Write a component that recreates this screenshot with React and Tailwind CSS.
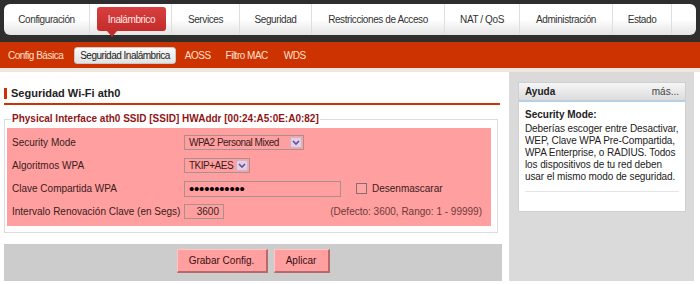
import React from 'react';

const tabs = [
    { label: 'Configuración', w: 'w-[86px]' },
    { label: 'Inalámbrico', w: 'w-[82px]', active: true },
    { label: 'Services', w: 'w-[68px]' },
    { label: 'Seguridad', w: 'w-[72px]' },
    { label: 'Restricciones de Acceso', w: 'w-[133px]' },
    { label: 'NAT / QoS', w: 'w-[75px]' },
    { label: 'Administración', w: 'w-[93px]' },
    { label: 'Estado', w: 'w-[59px]' },
];

function Chevron() {
    return (
        <svg width="8" height="5" viewBox="0 0 8 5">
            <path d="M1 1 L4 4 L7 1" fill="none" stroke="#5b4f9c" strokeWidth="1.6" />
        </svg>
    );
}

function FakeSelect({ value, width }) {
    return (
        <div className={`${width} h-[15px] flex items-center justify-between border border-[#a89090] bg-[#ff9f9f] pl-[4px] pr-[1px]`}>
            <span className="text-[#3a2020] leading-none whitespace-nowrap tracking-[-0.5px]">{value}</span>
            <span className="w-[12px] h-[11px] flex items-center justify-center bg-[#e6cfe2] border border-[#d0b4cc] rounded-[2px]">
                <Chevron />
            </span>
        </div>
    );
}

function Row({ label, children }) {
    return (
        <div className="h-[23px] flex items-center">
            <div className="w-[177px] shrink-0 pl-[5px] whitespace-nowrap text-[#3a2020]">{label}</div>
            {children}
        </div>
    );
}

export default function App() {
    return (
        <div className="w-[700px] h-[284px] overflow-hidden bg-white font-['Liberation_Sans',Arial,sans-serif] text-[10px] text-[#333]">
            {/* top tabs */}
            <div className="h-[42px] bg-[#2e2e2e] pt-[4px] pl-[4px] pr-[4px]">
                <div className="h-[31px] rounded-[6px] bg-gradient-to-b from-white via-white to-[#e4e4e4] flex">
                    {tabs.map((t) => (
                        <div
                            key={t.label}
                            className={`${t.w} shrink-0 border-r border-[#dedede] flex items-stretch tracking-[-0.4px] ${t.active ? 'pl-[7px] pr-[5px] pt-[3px] pb-[4px]' : ''}`}
                        >
                            {t.active ? (
                                <div className="relative flex-1 rounded-[3px] bg-gradient-to-b from-[#d8403f] to-[#c42b2b] text-[#ffe8e8] flex items-center justify-center">
                                    {t.label}
                                    <span className="absolute top-full left-[10px] w-0 h-0 border-l-[5px] border-r-[5px] border-t-[6px] border-l-transparent border-r-transparent border-t-[#c42b2b]" />
                                </div>
                            ) : (
                                <div className="flex-1 flex items-center justify-center">{t.label}</div>
                            )}
                        </div>
                    ))}
                </div>
            </div>

            {/* sub nav */}
            <div className="h-[26px] bg-[#cc3300] flex items-center pl-[8px] tracking-[-0.5px] text-[#ffe0d0]">
                <span>Config Básica</span>
                <span className="ml-[11px] px-[5px] h-[17px] flex items-center rounded-[3px] bg-gradient-to-b from-[#fafafa] to-[#e2e2e2] border border-[#c8c8c8] text-[#222]">
                    Seguridad Inalámbrica
                </span>
                <span className="ml-[9px]">AOSS</span>
                <span className="ml-[15px]">Filtro MAC</span>
                <span className="ml-[16px]">WDS</span>
            </div>
            <div className="h-[4px] bg-[#efe6dd]" />

            <div className="flex">
                {/* main column */}
                <div className="w-[498px] ml-[4px]">
                    <div className="mt-[13px] h-[16px] flex items-center">
                        <span className="w-[3px] h-[11px] bg-[#cc3300]" />
                        <span className="ml-[4px] text-[11px] font-bold text-[#222]">Seguridad Wi-Fi ath0</span>
                    </div>
                    <div className="mt-[2px] h-[2px] w-[496px] bg-[#cc3300]" />

                    <fieldset className="mt-[7px] w-[494px] border border-[#dcdcdc] pl-[2px] pt-[2px] pb-[6px]">
                        <legend className="ml-[4px] px-[1px] h-[14px] leading-[14px] font-bold text-[#8e1616]">
                            Physical Interface ath0 SSID [SSID] HWAddr [00:24:A5:0E:A0:82]
                        </legend>
                        <div className="w-[484px] bg-[#ff9f9f] pt-[3px] pb-[3px]">
                            <Row label="Security Mode">
                                <FakeSelect value="WPA2 Personal Mixed" width="w-[120px]" />
                            </Row>
                            <Row label="Algoritmos WPA">
                                <FakeSelect value="TKIP+AES" width="w-[66px]" />
                            </Row>
                            <Row label="Clave Compartida WPA">
                                <div className="w-[157px] h-[16px] border border-[#a89090] flex items-center pl-[4px] text-[15px] leading-none text-black tracking-[-0.2px]">
                                    •••••••••••
                                </div>
                                <span className="ml-[15px] w-[11px] h-[11px] border border-[#8a6a6a] bg-[#ffa5a5]" />
                                <span className="ml-[5px] text-[#3a2020]">Desenmascarar</span>
                            </Row>
                            <Row label="Intervalo Renovación Clave (en Segs)">
                                <div className="w-[40px] h-[15px] border border-[#a89090] flex items-center justify-end pr-[4px] text-[#3a2020]">
                                    3600
                                </div>
                                <span className="ml-auto pr-[9px] text-[#6e3a3a]">(Defecto: 3600, Rango: 1 - 99999)</span>
                            </Row>
                        </div>
                    </fieldset>

                    <div className="mt-[11px] w-[498px] h-[37px] bg-[#cccccc] flex justify-center items-start pt-[5px] gap-[6px]">
                        <button className="w-[91px] h-[24px] bg-[#ff9f9f] border-t border-l border-t-[#ffc4c4] border-l-[#ffc4c4] border-r-2 border-b-2 border-r-[#b86a6a] border-b-[#b86a6a] text-[#3a1010]">
                            Grabar Config.
                        </button>
                        <button className="w-[56px] h-[24px] bg-[#ff9f9f] border-t border-l border-t-[#ffc4c4] border-l-[#ffc4c4] border-r-2 border-b-2 border-r-[#b86a6a] border-b-[#b86a6a] text-[#3a1010]">
                            Aplicar
                        </button>
                    </div>
                </div>

                {/* help sidebar */}
                <div className="ml-[7px] w-[185px] h-[209px] bg-[#dadada] pt-[10px] pl-[9px]">
                    <div className="w-[168px] bg-white border border-[#cfcfcf]">
                        <div className="h-[19px] px-[6px] flex items-center justify-between bg-gradient-to-b from-[#f6f6f6] to-[#dcdcdc] border-b-2 border-[#b6cfe4]">
                            <span className="font-bold text-[#222]">Ayuda</span>
                            <span className="text-[#444]">más...</span>
                        </div>
                        <div className="px-[6px] pt-[7px] pb-[19px] text-[#222]">
                            <div className="font-bold leading-[12px] mb-[2px]">Security Mode:</div>
                            <div className="leading-[12px] whitespace-nowrap tracking-[-0.1px]">
                                Deberías escoger entre Desactivar,<br />
                                WEP, Clave WPA Pre-Compartida,<br />
                                WPA Enterprise, o RADIUS. Todos<br />
                                los dispositivos de tu red deben<br />
                                usar el mismo modo de seguridad.
                            </div>
                            <div className="mt-[8px] h-px bg-[#e6e6e6]" />
                        </div>
                    </div>
                </div>
            </div>
        </div>
    );
}
